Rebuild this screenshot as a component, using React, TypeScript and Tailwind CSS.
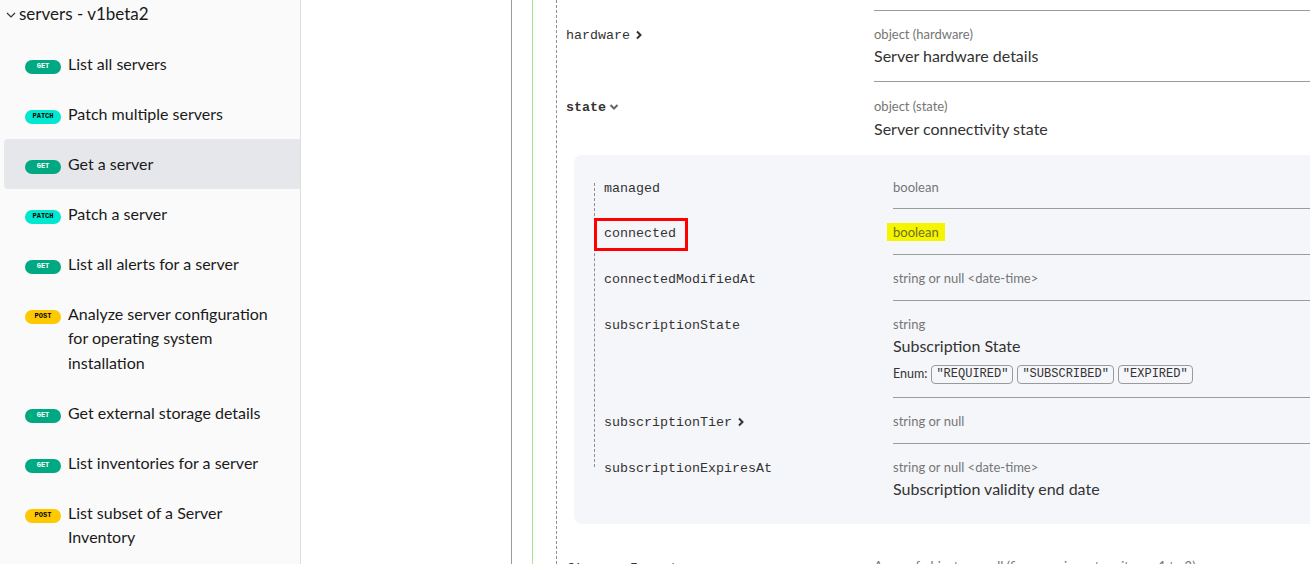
import React from "react";

const sans = { fontFamily: "Lato, 'Noto Sans', sans-serif" };
const mono = { fontFamily: "'Liberation Mono', 'DejaVu Sans Mono', monospace" };

type Method = "GET" | "PATCH" | "POST";

const badgeCls: Record<Method, string> = {
  GET: "bg-[#01a982] text-white",
  PATCH: "bg-[#00e8cf] text-black",
  POST: "bg-[#fec901] text-black",
};

const navItems: { m: Method; t: string; active?: boolean }[] = [
  { m: "GET", t: "List all servers" },
  { m: "PATCH", t: "Patch multiple servers" },
  { m: "GET", t: "Get a server", active: true },
  { m: "PATCH", t: "Patch a server" },
  { m: "GET", t: "List all alerts for a server" },
  { m: "POST", t: "Analyze server configuration for operating system installation" },
  { m: "GET", t: "Get external storage details" },
  { m: "GET", t: "List inventories for a server" },
  { m: "POST", t: "List subset of a Server Inventory" },
];

function ChevronRight() {
  return (
    <svg width="8" height="10" viewBox="0 0 8 10" className="inline-block ml-[5px] mb-[1px]">
      <path d="M2 1.5 L5.5 5 L2 8.5" fill="none" stroke="#333" strokeWidth="2" />
    </svg>
  );
}

function ChevronDown() {
  return (
    <svg width="10" height="8" viewBox="0 0 10 8" className="inline-block ml-[3px] mb-[1px]">
      <path d="M1.5 2 L5 5.5 L8.5 2" fill="none" stroke="#666" strokeWidth="2" />
    </svg>
  );
}

function Sidebar() {
  return (
    <aside className="w-[301px] shrink-0 h-full bg-[#fafafa] border-r border-[#dedede] text-[#1a1a1a]" style={sans}>
      <div className="h-[39px] flex items-start pt-[2px]">
        <div className="flex items-center h-[24px] pl-[6px]">
          <svg width="10" height="6" viewBox="0 0 10 6" className="mr-[3px] mt-[2px]">
            <path d="M1 1 L5 5 L9 1" fill="none" stroke="#333" strokeWidth="1.2" />
          </svg>
          <span className="text-[17px] leading-[24px]">servers - v1beta2</span>
        </div>
      </div>
      {navItems.map((it, i) => (
        <div
          key={i}
          className={
            "ml-[4px] flex items-start pl-[21px] pr-[12px] py-[12.75px] " +
            (it.active ? "bg-[#e5e7eb] rounded-l-[4px]" : "")
          }
        >
          <span
            className={
              "shrink-0 mt-[8px] w-[36px] h-[14px] rounded-full flex items-center justify-center text-[7px] font-bold leading-none " +
              badgeCls[it.m]
            }
            style={mono}
          >
            {it.m}
          </span>
          <span className="ml-[7px] text-[16px] leading-[24.5px]">{it.t}</span>
        </div>
      ))}
    </aside>
  );
}

function TypeText({ children }: { children: React.ReactNode }) {
  return <div className="text-[13px] leading-[20px] text-[#767676]">{children}</div>;
}

function Desc({ children }: { children: React.ReactNode }) {
  return <div className="text-[16px] leading-[24px] text-[#333]">{children}</div>;
}

function InnerRow({
  label,
  first,
  children,
  chevron,
  box,
}: {
  label: string;
  first?: boolean;
  children: React.ReactNode;
  chevron?: boolean;
  box?: boolean;
}) {
  return (
    <div className="flex">
      <div className="w-[299px] shrink-0 pl-[10px] pt-[11px]">
        <span className="relative text-[13.33px] leading-[20px] text-[#333]" style={mono}>
          {label}
          {chevron && <ChevronRight />}
          {box && (
            <span className="absolute left-[-10px] top-[-8px] w-[94px] h-[33px] border-[3px] border-[#ff0000]" />
          )}
        </span>
      </div>
      <div
        className={
          "flex-1 " + (first ? "pt-[14px] pb-[11px]" : "pt-[13px] pb-[12px] border-t border-[#9b9b9b]")
        }
      >
        {children}
      </div>
    </div>
  );
}

function Content() {
  return (
    <div className="pl-0 text-[#333]" style={sans}>
      <div className="h-[10px]" />
      {/* hardware */}
      <div className="flex">
        <div className="w-[317px] shrink-0 pl-[9px] pt-[11px]">
          <span className="text-[13.33px] leading-[20px]" style={mono}>
            hardware
            <ChevronRight />
          </span>
        </div>
        <div className="flex-1 border-t border-[#9b9b9b] pt-[13px] pb-[13px]">
          <TypeText>object (hardware)</TypeText>
          <Desc>Server hardware details</Desc>
        </div>
      </div>
      {/* state */}
      <div className="flex">
        <div className="w-[317px] shrink-0 pl-[9px] pt-[12px]">
          <span className="text-[13.33px] leading-[20px] font-bold" style={mono}>
            state
            <ChevronDown />
          </span>
        </div>
        <div className="flex-1 border-t border-[#9b9b9b] pt-[14px] pb-[14px]">
          <TypeText>object (state)</TypeText>
          <div className="mt-[1px]">
            <Desc>Server connectivity state</Desc>
          </div>
        </div>
      </div>
      {/* nested panel */}
      <div className="ml-[17px] mr-[-30px] bg-[#f5f6fa] rounded-[8px] pl-[20px] pt-[8px] pb-[11px] mb-[18px]">
        <div className="relative">
          <div className="absolute left-0 top-[20px] bottom-[46px] border-l border-dashed border-[#8f8f8f]" />
          <InnerRow label="managed" first>
            <TypeText>boolean</TypeText>
          </InnerRow>
          <InnerRow label="connected" box>
            <TypeText>
              <span className="bg-[#f5f500] -ml-[6px] px-[6px] py-[1px] text-[#6e6e20]">boolean</span>
            </TypeText>
          </InnerRow>
          <InnerRow label="connectedModifiedAt">
            <TypeText>string or null &lt;date-time&gt;</TypeText>
          </InnerRow>
          <InnerRow label="subscriptionState">
            <TypeText>string</TypeText>
            <Desc>Subscription State</Desc>
            <div className="flex items-center mt-[7px] mb-[1px] h-[19px]">
              <span className="text-[12.5px] text-[#333] mr-[4px]">Enum:</span>
              {['"REQUIRED"', '"SUBSCRIBED"', '"EXPIRED"'].map((e) => (
                <span
                  key={e}
                  className="mr-[4px] h-[19px] px-[4px] border border-[#9a9a9a] rounded-[4px] text-[12px] leading-[17px] text-[#333]"
                  style={mono}
                >
                  {e}
                </span>
              ))}
            </div>
          </InnerRow>
          <InnerRow label="subscriptionTier" chevron>
            <TypeText>string or null</TypeText>
          </InnerRow>
          <InnerRow label="subscriptionExpiresAt">
            <TypeText>string or null &lt;date-time&gt;</TypeText>
            <Desc>Subscription validity end date</Desc>
          </InnerRow>
        </div>
      </div>
      {/* next row (cut off) */}
      <div className="flex">
        <div className="w-[317px] shrink-0 pl-[9px] pt-[12px]">
          <span className="text-[13.33px] leading-[20px]" style={mono}>
            firmwareInventory
          </span>
        </div>
        <div className="flex-1 pt-[14px]">
          <TypeText>Array of objects or null (firmware inventory items, 1 to 2)</TypeText>
        </div>
      </div>
    </div>
  );
}

export default function App() {
  return (
    <div className="w-[1310px] h-[564px] overflow-hidden flex bg-white">
      <Sidebar />
      <main className="flex-1 h-full overflow-hidden bg-white">
        <div className="ml-[210px] h-full border-l border-[#9a9a9a]">
          <div className="ml-[20px] h-full border-l border-[#a9e48f]">
            <div className="ml-[23px] h-full border-l border-dashed border-[#8f8f8f]">
              <Content />
            </div>
          </div>
        </div>
      </main>
    </div>
  );
}
